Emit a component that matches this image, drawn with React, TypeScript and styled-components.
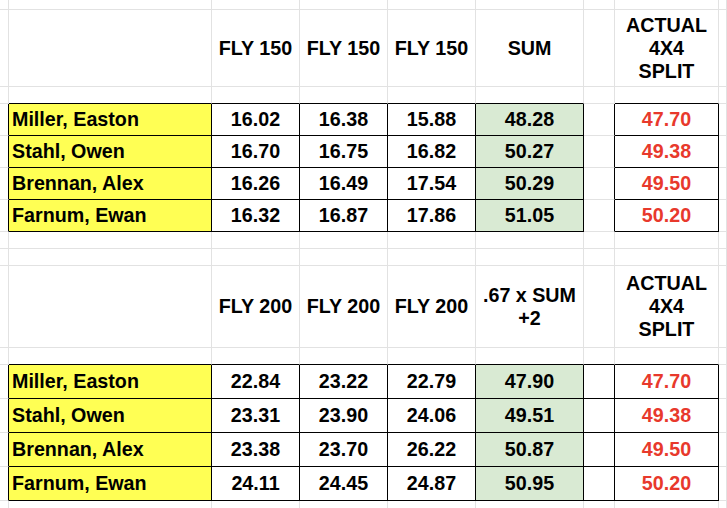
import React from "react";
import styled, { createGlobalStyle } from "styled-components";

const GRID = "#e2e2e2";
const INK = "#000000";

const Global = createGlobalStyle`
  html, body { margin: 0; padding: 0; background: #ffffff; overflow: hidden; }
  body { font-family: "Liberation Sans", Arial, sans-serif; }
`;

const Sheet = styled.div`
  display: grid;
  grid-template-columns: 9px 203px 88px 88px 88px 108px 31px 104px 8px;
  grid-template-rows: 10px 77px 17px 32px 32px 32px 32px 17px 17px 82px 17px 34px 34px 34px 34px 8px;
  width: 727px;
  height: 508px;
  overflow: hidden;
  font-family: "Liberation Sans", Arial, sans-serif;
  font-weight: 700;
  font-size: 19.7px;
  color: #000;
`;

type Fill = "none" | "yellow" | "green";

const Cell = styled.div<{
  $rb?: boolean;
  $bb?: boolean;
  $fill?: Fill;
  $align?: "left" | "center";
  $red?: boolean;
}>`
  box-sizing: border-box;
  display: flex;
  align-items: center;
  justify-content: ${(p) => (p.$align === "left" ? "flex-start" : "center")};
  padding-left: ${(p) => (p.$align === "left" ? "3px" : "0")};
  border-right: 1px solid ${(p) => (p.$rb ? INK : GRID)};
  border-bottom: 1px solid ${(p) => (p.$bb ? INK : GRID)};
  background: ${(p) =>
    p.$fill === "yellow" ? "#ffff54" : p.$fill === "green" ? "#d9ead3" : "#ffffff"};
  color: ${(p) => (p.$red ? "#e8392c" : "#000")};
  white-space: nowrap;
  overflow: hidden;
`;

const HeadText = styled.span`
  display: block;
  text-align: center;
  white-space: pre-line;
  line-height: 23px;
`;

type Row = { name: string; a: string; b: string; c: string; sum: string; actual: string };

const t1: Row[] = [
  { name: "Miller, Easton", a: "16.02", b: "16.38", c: "15.88", sum: "48.28", actual: "47.70" },
  { name: "Stahl, Owen", a: "16.70", b: "16.75", c: "16.82", sum: "50.27", actual: "49.38" },
  { name: "Brennan, Alex", a: "16.26", b: "16.49", c: "17.54", sum: "50.29", actual: "49.50" },
  { name: "Farnum, Ewan", a: "16.32", b: "16.87", c: "17.86", sum: "51.05", actual: "50.20" },
];

const t2: Row[] = [
  { name: "Miller, Easton", a: "22.84", b: "23.22", c: "22.79", sum: "47.90", actual: "47.70" },
  { name: "Stahl, Owen", a: "23.31", b: "23.90", c: "24.06", sum: "49.51", actual: "49.38" },
  { name: "Brennan, Alex", a: "23.38", b: "23.70", c: "26.22", sum: "50.87", actual: "49.50" },
  { name: "Farnum, Ewan", a: "24.11", b: "24.45", c: "24.87", sum: "50.95", actual: "50.20" },
];

const COLS = 9;

function BlankRow({ blackBottom, gapBlack }: { blackBottom?: boolean; gapBlack?: boolean }) {
  return (
    <>
      {Array.from({ length: COLS }).map((_, i) => {
        const overTable = i >= 1 && i <= 7 && (i !== 6 || gapBlack);
        return <Cell key={i} $bb={blackBottom && overTable} />;
      })}
    </>
  );
}

function HeaderRow({ labels, sumLabel }: { labels: string[]; sumLabel: string }) {
  return (
    <>
      <Cell />
      <Cell />
      {labels.map((l, i) => (
        <Cell key={i}>
          <HeadText>{l}</HeadText>
        </Cell>
      ))}
      <Cell>
        <HeadText>{sumLabel}</HeadText>
      </Cell>
      <Cell />
      <Cell>
        <HeadText>{"ACTUAL\n4X4\nSPLIT"}</HeadText>
      </Cell>
      <Cell />
    </>
  );
}

function DataRows({ rows, gapBlack }: { rows: Row[]; gapBlack?: boolean }) {
  return (
    <>
      {rows.map((r, i) => (
        <React.Fragment key={i}>
          <Cell $rb />
          <Cell $rb $bb $fill="yellow" $align="left">{r.name}</Cell>
          <Cell $rb $bb>{r.a}</Cell>
          <Cell $rb $bb>{r.b}</Cell>
          <Cell $rb $bb>{r.c}</Cell>
          <Cell $rb $bb $fill="green">{r.sum}</Cell>
          <Cell $rb $bb={gapBlack} />
          <Cell $rb $bb $red>{r.actual}</Cell>
          <Cell />
        </React.Fragment>
      ))}
    </>
  );
}

export default function App() {
  return (
    <>
      <Global />
      <Sheet>
        <BlankRow />
        <HeaderRow labels={["FLY 150", "FLY 150", "FLY 150"]} sumLabel="SUM" />
        <BlankRow blackBottom />
        <DataRows rows={t1} />
        <BlankRow />
        <BlankRow />
        <HeaderRow labels={["FLY 200", "FLY 200", "FLY 200"]} sumLabel={".67 x SUM\n+2"} />
        <BlankRow blackBottom gapBlack />
        <DataRows rows={t2} gapBlack />
        <BlankRow />
      </Sheet>
    </>
  );
}
